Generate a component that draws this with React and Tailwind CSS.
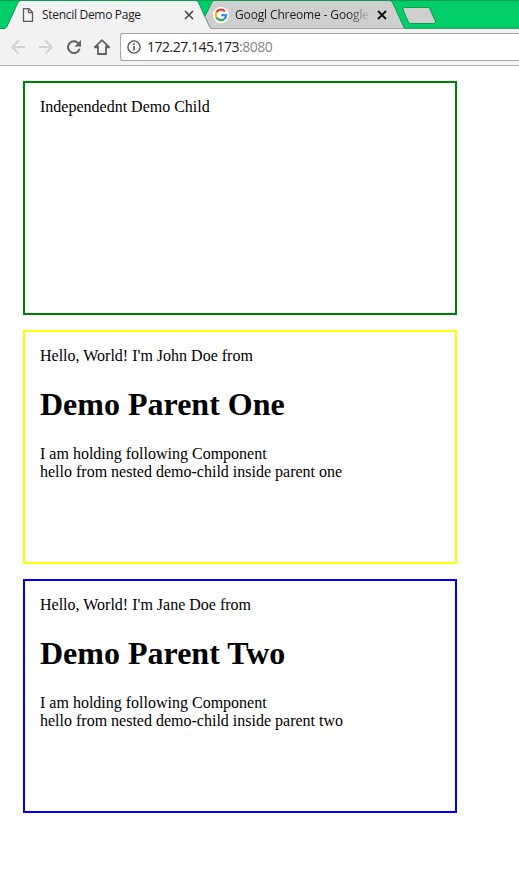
import React from "react";

function TabShapes() {
  return (
    <svg className="absolute inset-0" width="519" height="29" viewBox="0 0 519 29">
      <path d="M0 28.500H519" stroke="#3f8f68" />
      <path d="M205 16 212 2Q212.800 .5 214 .5H389.500Q391.500 .5 392.500 2.500L404.500 28.500H211Z" fill="#cfcfcf" />
      <path d="M205 16 212 2Q212.800 .5 214 .5H389.500Q391.500 .5 392.500 2.500L404.500 28.500" fill="none" stroke="#0c9a55" />
      <path d="M211 28.500H404" stroke="#a2a2a2" />
      <path d="M0 29V28.500H4Q6 28.500 7 26.500L18 2.500Q19 .5 21 .5H195.500Q197.500 .5 198.500 2.500L209.500 26.500Q210.300 28.500 212 29Z" fill="#f2f2f2" />
      <path d="M0 28.500H4Q6 28.500 7 26.500L18 2.500Q19 .5 21 .5H195.500Q197.500 .5 198.500 2.500L204.500 16" fill="none" stroke="#0c9a55" />
      <path d="M204.500 16 209.500 26.500Q210.300 28.500 212 28.500" fill="none" stroke="#8f8f8f" />
      <path d="M0 .5H519" stroke="#0c9a55" />
      <path d="M404.500 7.500H428Q429.500 7.500 430 9L435.500 21.500Q436 23.500 434.500 23.500H410.500Q409 23.500 408.300 22L403 9.500Q402.500 7.500 404.500 7.500Z" fill="#cfcfcf" stroke="#0c9a55" />
    </svg>
  );
}

function CloseIcon({ color, width }) {
  return (
    <svg width="10" height="10" viewBox="0 0 10 10" className="shrink-0">
      <path d="M1 1 9 9M9 1 1 9" stroke={color} strokeWidth={width} />
    </svg>
  );
}

function GoogleIcon() {
  return (
    <svg width="16" height="16" viewBox="0 0 16 16" className="shrink-0">
      <circle cx="8" cy="8" r="8" fill="#fff" />
      <g fill="none" strokeWidth="2.300">
        <path d="M11.900 4.400A5.200 5.200 0 0 0 3.400 5.500" stroke="#ea4335" />
        <path d="M3.400 5.500A5.200 5.200 0 0 0 3.400 10.500" stroke="#fbbc05" />
        <path d="M3.400 10.500A5.200 5.200 0 0 0 11.400 11.900" stroke="#34a853" />
        <path d="M11.400 11.900A5.200 5.200 0 0 0 13.200 8.200H8.200" stroke="#4285f4" />
      </g>
    </svg>
  );
}

function TabStrip() {
  return (
    <div className="relative h-[29px] bg-[#00ce69] pt-px">
      <TabShapes />
      <div className="relative flex h-7 items-center font-['Open_Sans',sans-serif] text-[12px] text-[#1c1c1c]">
        <div className="flex w-[205px] items-center pl-[22px]">
          <svg width="12" height="14" viewBox="0 0 12 14" className="shrink-0">
            <path d="M1.500 .7H7L10.500 4.200V13.300H1.500ZM6.500 .7V4.700H10.500" fill="#f5f5f5" stroke="#5a5a5a" strokeWidth="1.300" />
          </svg>
          <span className="ml-2 w-[142px] whitespace-nowrap tracking-[-0.3px]">Stencil Demo Page</span>
          <CloseIcon color="#444" width="1.600" />
        </div>
        <div className="flex items-center pl-2">
          <GoogleIcon />
          <span className="ml-1.5 w-[135px] overflow-hidden whitespace-nowrap tracking-[-0.14px] [mask-image:linear-gradient(to_right,black_113px,transparent_136px)]">Googl Chreome - Google</span>
          <span className="ml-[7px] flex"><CloseIcon color="#111" width="1.900" /></span>
        </div>
      </div>
    </div>
  );
}

function Toolbar() {
  return (
    <div className="flex h-[37px] items-center border-b border-[#b0b0b0] bg-[#f2f2f2]">
      <svg width="120" height="36" viewBox="0 29 120 36" fill="none" className="shrink-0">
        <g stroke="#d2d3d4" strokeWidth="2">
          <path d="M25 47H12.500M18.600 40.400 12.200 47 18.600 53.600" />
          <path d="M39 47H51.500M45.400 40.400 51.800 47 45.400 53.600" />
        </g>
        <path d="M78.300 43.200A5.900 5.900 0 1 0 79.600 48.800" stroke="#5f6265" strokeWidth="2" />
        <path d="M81 40V46.500H74.500Z" fill="#5f6265" />
        <path d="M94.300 47.700 102 40.200 109.700 47.700M98 45.500V54H106V45.500M94.500 47.300H98.500M105.500 47.300H109.500" stroke="#5f6265" strokeWidth="1.800" />
      </svg>
      <div className="flex h-7 flex-1 items-center rounded-l-[3px] border border-r-0 border-[#a6a6a6] bg-white pl-1.5">
        <svg width="14" height="14" viewBox="0 0 14 14" fill="none" className="shrink-0">
          <circle cx="7" cy="7" r="6.100" stroke="#555" strokeWidth="1.400" />
          <path d="M7 6V10.500M7 3.300V4.900" stroke="#555" strokeWidth="1.600" />
        </svg>
        <span className="mb-0.5 ml-[6px] whitespace-nowrap font-['Open_Sans',sans-serif] text-[14px] tracking-[-0.5px] text-[#222]">
          172.27.145.173<span className="text-[#888]">:8080</span>
        </span>
      </div>
    </div>
  );
}

function Box({ className, children }) {
  return <div className={`h-[234px] w-[434px] border-2 p-[15px] ${className}`}>{children}</div>;
}

function Parent({ className, person, title, child }) {
  return (
    <Box className={className}>
      <p>Hello, World! I'm {person} from</p>
      <h1 className="mt-[21px] mb-[23px] text-[32px] leading-[36px] font-bold">{title}</h1>
      <p>I am holding following Component</p>
      <p>hello from nested demo-child inside parent {child}</p>
    </Box>
  );
}

export default function App() {
  return (
    <div className="h-[874px] w-[519px] overflow-hidden bg-white">
      <TabStrip />
      <Toolbar />
      <main className="flex flex-col gap-[15px] pt-[15px] pl-[23px] font-['Liberation_Serif',serif] text-[16px] leading-[18px] text-black">
        <Box className="border-[#008000]">Independednt Demo Child</Box>
        <Parent className="border-[#ffff00]" person="John Doe" title="Demo Parent One" child="one" />
        <Parent className="border-[#0000ff]" person="Jane Doe" title="Demo Parent Two" child="two" />
      </main>
    </div>
  );
}
